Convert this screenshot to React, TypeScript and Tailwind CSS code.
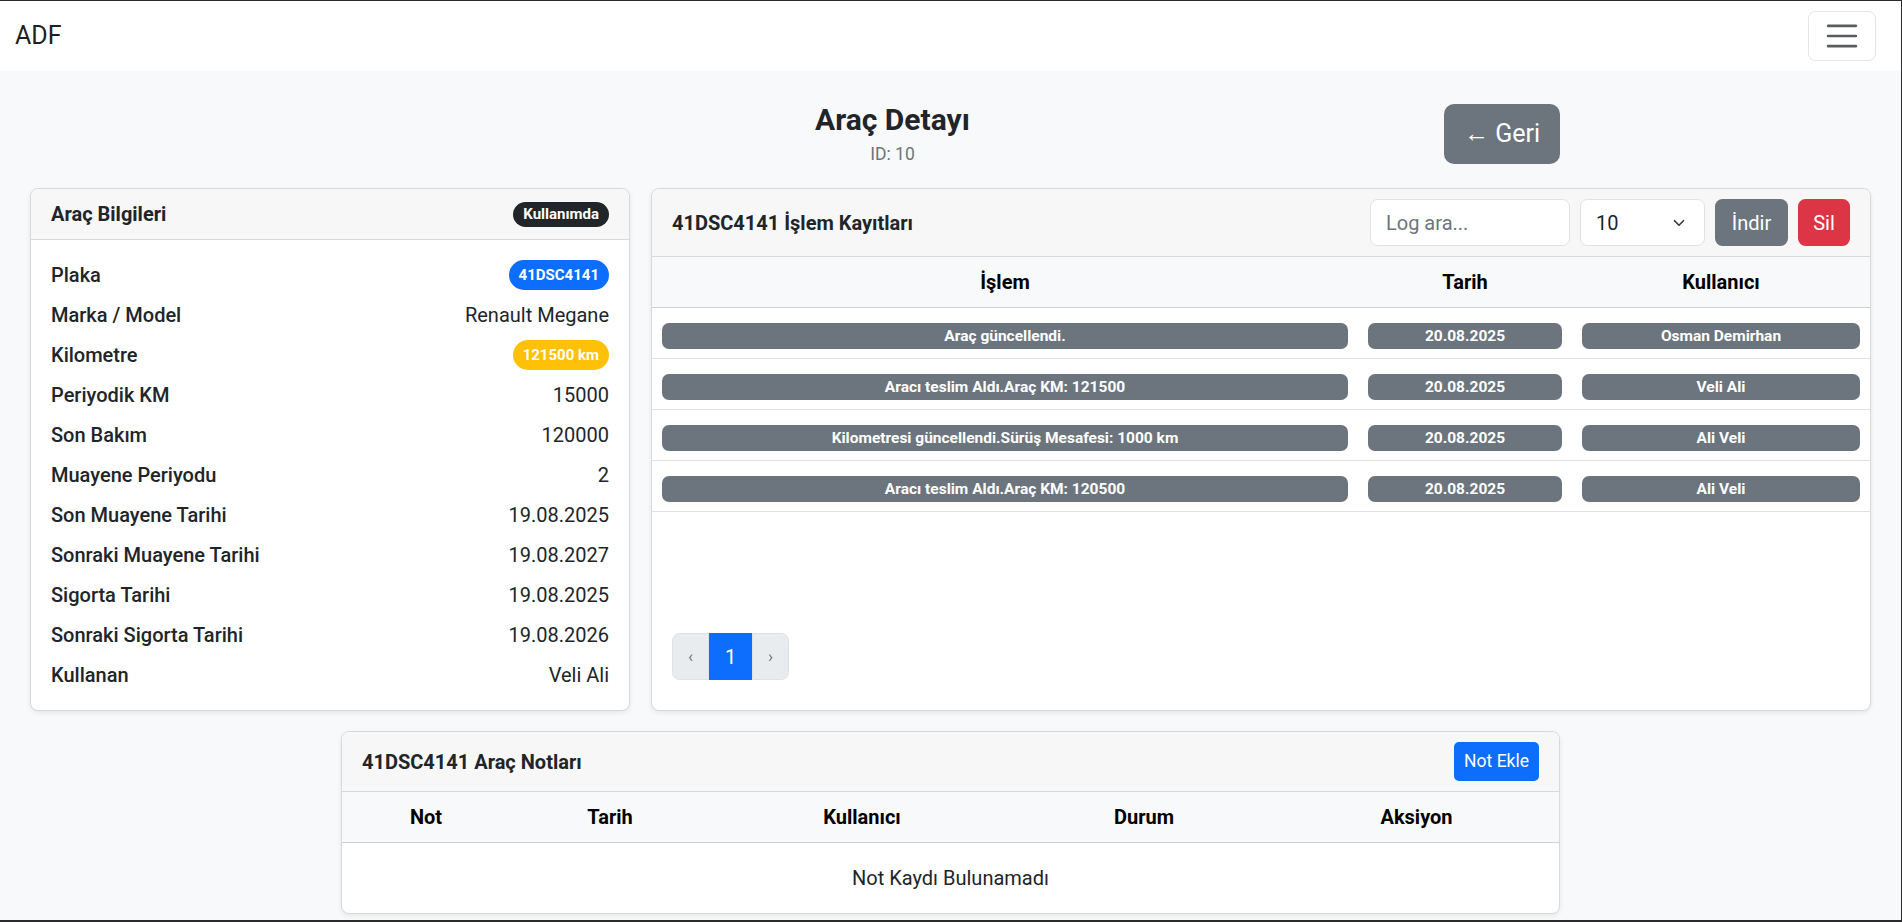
import { ChevronDown } from "lucide-react";

const details = [
  { label: "Plaka", value: "41DSC4141", badge: "bg-[#0d6efd]" },
  { label: "Marka / Model", value: "Renault Megane" },
  { label: "Kilometre", value: "121500 km", badge: "bg-[#ffc107]" },
  { label: "Periyodik KM", value: "15000" },
  { label: "Son Bakım", value: "120000" },
  { label: "Muayene Periyodu", value: "2" },
  { label: "Son Muayene Tarihi", value: "19.08.2025" },
  { label: "Sonraki Muayene Tarihi", value: "19.08.2027" },
  { label: "Sigorta Tarihi", value: "19.08.2025" },
  { label: "Sonraki Sigorta Tarihi", value: "19.08.2026" },
  { label: "Kullanan", value: "Veli Ali" },
];

const logs = [
  { action: "Araç güncellendi.", date: "20.08.2025", user: "Osman Demirhan" },
  { action: "Aracı teslim Aldı.Araç KM: 121500", date: "20.08.2025", user: "Veli Ali" },
  { action: "Kilometresi güncellendi.Sürüş Mesafesi: 1000 km", date: "20.08.2025", user: "Ali Veli" },
  { action: "Aracı teslim Aldı.Araç KM: 120500", date: "20.08.2025", user: "Ali Veli" },
];

function Badge({ children }: { children: React.ReactNode }) {
  return (
    <div className="block h-[26px] rounded-[7px] bg-[#6c757d] text-center text-[15.5px] font-bold leading-[26px] text-white">
      {children}
    </div>
  );
}

export default function App() {
  return (
    <div className="h-screen overflow-hidden border-t border-r border-b-2 border-[#2b2b2b] bg-[#f8f9fa] font-['Roboto','Segoe_UI',sans-serif] text-[20px] text-[#212529]">
      {/* Navbar */}
      <nav className="flex h-[70px] items-center justify-between bg-white pl-[15px] pr-[25px]">
        <span className="text-[25px] leading-[38px] text-black/90">ADF</span>
        <button className="flex h-[50px] w-[68px] items-center justify-center rounded-[7.5px] border border-black/10">
          <svg width="38" height="38" viewBox="0 0 30 30">
            <path d="M4 7h22M4 15h22M4 23h22" stroke="rgba(33,37,41,0.75)" strokeWidth="2" strokeLinecap="round" />
          </svg>
        </button>
      </nav>

      <main className="px-[30px] pt-[33px]">
        {/* Title row */}
        <div className="mx-auto flex h-[60px] w-[1219px] items-center justify-between">
          <div />
          <div className="text-center">
            <h4 className="text-[30px] font-bold leading-[36px]">Araç Detayı</h4>
            <div className="mt-[4px] text-[17.5px] leading-[24px] text-[#6c757d]">ID: 10</div>
          </div>
          <button className="h-[60px] rounded-[10px] bg-[#6c757d] px-[20px] text-[25px] text-white">← Geri</button>
        </div>

        <div className="mt-[24px] grid grid-cols-[600px_1fr] gap-[21px]">
          {/* Araç Bilgileri */}
          <div className="overflow-hidden rounded-[8px] border border-[#d9d9d9] bg-white shadow-[0_2px_5px_rgba(0,0,0,0.075)]">
            <div className="flex items-center justify-between border-b border-[#d9d9d9] bg-[#f7f7f7] px-[20px] py-[10px] leading-[30px]">
              <span className="font-bold">Araç Bilgileri</span>
              <span className="rounded-full bg-[#212529] px-[10px] text-[15px] font-bold leading-[25px] text-white">Kullanımda</span>
            </div>
            <div className="px-[20px] py-[15px]">
              {details.map((d) => (
                <div key={d.label} className="flex h-[40px] items-center justify-between">
                  <span className="font-medium">{d.label}</span>
                  {d.badge ? (
                    <span className={`${d.badge} rounded-full px-[10px] text-[15px] font-bold leading-[30px] text-white`}>{d.value}</span>
                  ) : (
                    <span>{d.value}</span>
                  )}
                </div>
              ))}
            </div>
          </div>

          {/* İşlem Kayıtları */}
          <div className="flex flex-col overflow-hidden rounded-[8px] border border-[#d9d9d9] bg-white shadow-[0_2px_5px_rgba(0,0,0,0.075)]">
            <div className="flex items-center justify-between border-b border-[#d9d9d9] bg-[#f7f7f7] px-[20px] py-[10px]">
              <span className="font-bold">41DSC4141 İşlem Kayıtları</span>
              <div className="flex items-center gap-[10px]">
                <input
                  placeholder="Log ara..."
                  className="h-[47px] w-[200px] rounded-[7.5px] border border-[#dee2e6] bg-white px-[15px] text-[20px] outline-none placeholder:text-[#6c757d]"
                />
                <div className="relative flex h-[47px] w-[125px] items-center rounded-[7.5px] border border-[#dee2e6] bg-white pl-[15px]">
                  <span>10</span>
                  <ChevronDown className="absolute right-[16px] top-[14px] text-[#343a40]" size={18} strokeWidth={2.2} />
                </div>
                <button className="h-[47px] w-[73px] rounded-[7.5px] bg-[#6c757d] text-white">İndir</button>
                <button className="h-[47px] w-[52px] rounded-[7.5px] bg-[#dc3545] text-white">Sil</button>
              </div>
            </div>
            <table className="w-full table-fixed border-collapse">
              <colgroup>
                <col className="w-[706px]" />
                <col className="w-[214px]" />
                <col />
              </colgroup>
              <thead>
                <tr className="border-b border-[#cfd1d3] bg-[#f8f9fa] text-black">
                  <th className="py-[10px] text-center font-bold leading-[30px]">İşlem</th>
                  <th className="py-[10px] text-center font-bold leading-[30px]">Tarih</th>
                  <th className="py-[10px] text-center font-bold leading-[30px]">Kullanıcı</th>
                </tr>
              </thead>
              <tbody>
                {logs.map((l, i) => (
                  <tr key={i} className="border-b border-[#dee2e6]">
                    <td className="px-[10px] pt-[15px] pb-[9px]"><Badge>{l.action}</Badge></td>
                    <td className="px-[10px] pt-[15px] pb-[9px]"><Badge>{l.date}</Badge></td>
                    <td className="px-[10px] pt-[15px] pb-[9px]"><Badge>{l.user}</Badge></td>
                  </tr>
                ))}
              </tbody>
            </table>
            <div className="mt-auto px-[20px] pb-[30px]">
              <div className="flex h-[47px] w-fit">
                <span className="flex w-[37px] items-center justify-center rounded-l-[7.5px] border border-[#dee2e6] bg-[#e9ecef] text-[17px] text-[#6c757d]">‹</span>
                <span className="flex w-[43px] items-center justify-center bg-[#0d6efd] text-white">1</span>
                <span className="flex w-[37px] items-center justify-center rounded-r-[7.5px] border border-[#dee2e6] bg-[#e9ecef] text-[17px] text-[#6c757d]">›</span>
              </div>
            </div>
          </div>
        </div>

        {/* Araç Notları */}
        <div className="mx-auto mt-[20px] w-[1219px] overflow-hidden rounded-[8px] border border-[#d9d9d9] bg-white shadow-[0_2px_5px_rgba(0,0,0,0.075)]">
          <div className="flex items-center justify-between border-b border-[#d9d9d9] bg-[#f7f7f7] px-[20px] py-[10px]">
            <span className="font-bold">41DSC4141 Araç Notları</span>
            <button className="h-[39px] rounded-[5px] bg-[#0d6efd] px-[10px] text-[17.5px] text-white">Not Ekle</button>
          </div>
          <table className="w-full table-fixed border-collapse">
            <colgroup>
              <col className="w-[168px]" />
              <col className="w-[200px]" />
              <col className="w-[304px]" />
              <col className="w-[260px]" />
              <col />
            </colgroup>
            <thead>
              <tr className="border-b border-[#cfd1d3] bg-[#f8f9fa] text-black">
                {["Not", "Tarih", "Kullanıcı", "Durum", "Aksiyon"].map((h) => (
                  <th key={h} className="py-[10px] text-center font-bold leading-[30px]">{h}</th>
                ))}
              </tr>
            </thead>
            <tbody>
              <tr>
                <td colSpan={5} className="py-[20px] text-center leading-[30px]">Not Kaydı Bulunamadı</td>
              </tr>
            </tbody>
          </table>
        </div>
      </main>
    </div>
  );
}
